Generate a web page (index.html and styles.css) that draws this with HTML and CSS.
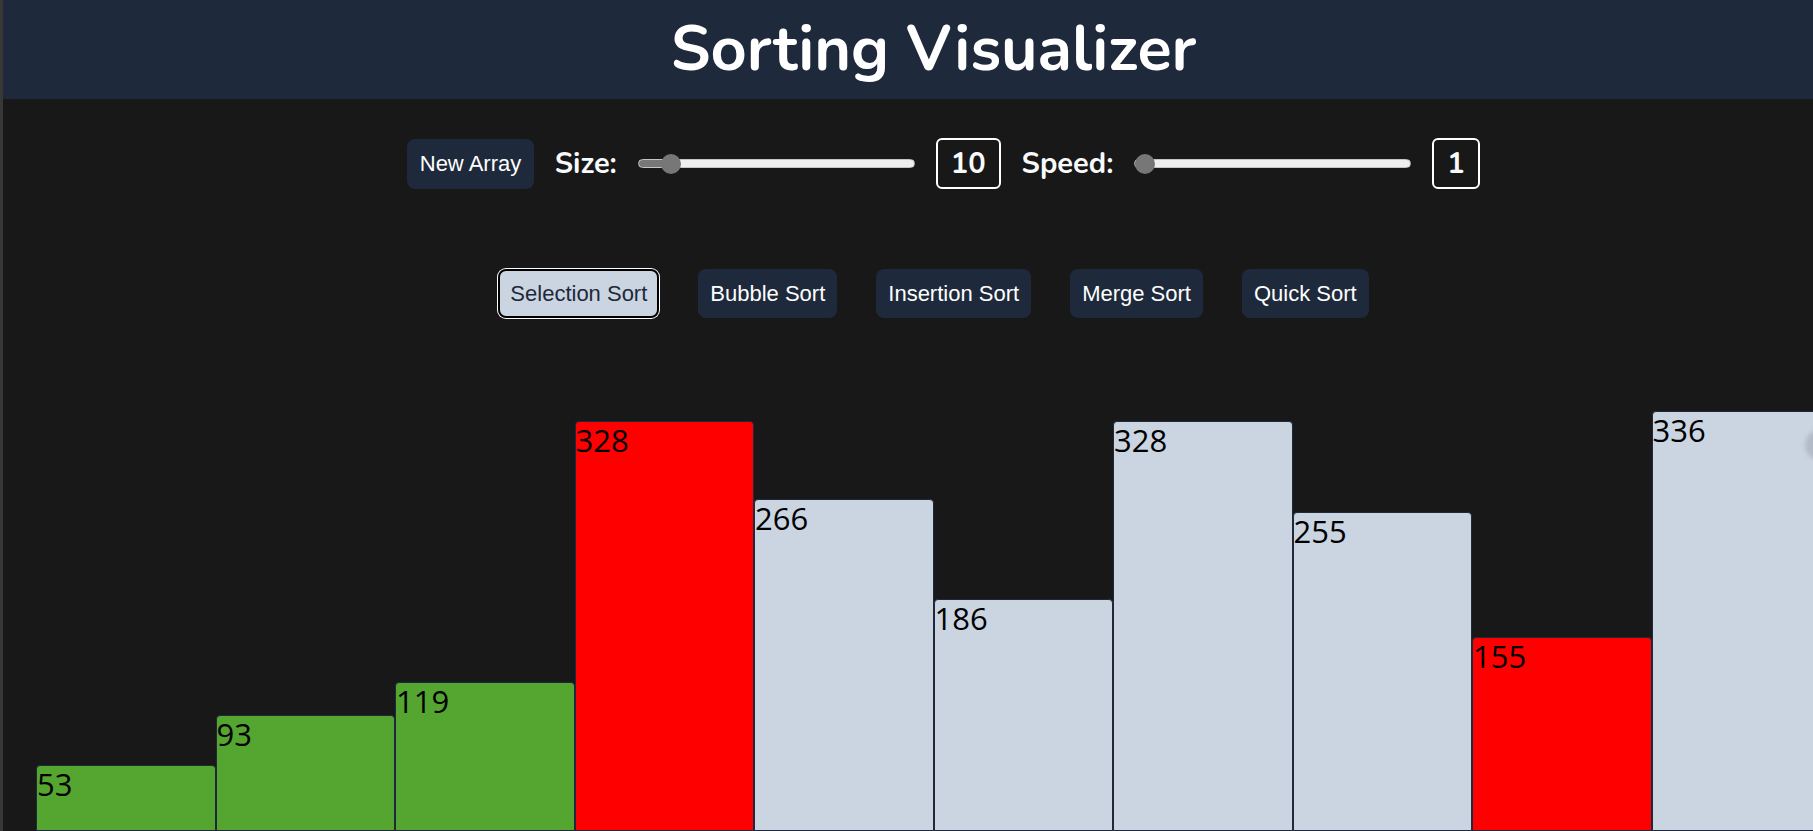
FILE: index.html
```html
<!DOCTYPE html>
<html lang="en">
<head>
<meta charset="utf-8">
<title>Sorting Visualizer</title>
<link rel="stylesheet" href="styles.css">
</head>
<body>
<div class="app">
  <header class="header">
    <h1 class="title">Sorting Visualizer</h1>
  </header>

  <section class="controls">
    <button class="btn">New Array</button>
    <label class="label" for="size">Size:</label>
    <input id="size" class="slider" type="range" min="5" max="63" value="10" style="--fill: 11.6%">
    <span class="value">10</span>
    <label class="label" for="speed">Speed:</label>
    <input id="speed" class="slider" type="range" min="1" max="10" value="1" style="--fill: 3.6%">
    <span class="value">1</span>
  </section>

  <nav class="algos">
    <button class="btn btn--active">Selection Sort</button>
    <button class="btn">Bubble Sort</button>
    <button class="btn">Insertion Sort</button>
    <button class="btn">Merge Sort</button>
    <button class="btn">Quick Sort</button>
  </nav>

  <main class="bars">
    <div class="bar bar--sorted" style="height:66.25px"><span class="bar__num">53</span></div>
    <div class="bar bar--sorted" style="height:116.25px"><span class="bar__num">93</span></div>
    <div class="bar bar--sorted" style="height:148.75px"><span class="bar__num">119</span></div>
    <div class="bar bar--compare" style="height:410px"><span class="bar__num">328</span></div>
    <div class="bar" style="height:332.5px"><span class="bar__num">266</span></div>
    <div class="bar" style="height:232.5px"><span class="bar__num">186</span></div>
    <div class="bar" style="height:410px"><span class="bar__num">328</span></div>
    <div class="bar" style="height:318.75px"><span class="bar__num">255</span></div>
    <div class="bar bar--compare" style="height:193.75px"><span class="bar__num">155</span></div>
    <div class="bar" style="height:420px"><span class="bar__num">336</span></div>
  </main>
</div>
<div class="edge-knob"></div>
</body>
</html>
```

FILE: styles.css
```css
html, body {
  margin: 0;
  padding: 0;
  height: 100%;
  overflow: hidden;
}

body {
  background: #181818;
  border-left: 3px solid #383838;
  font-family: "Liberation Sans", Arial, sans-serif;
}

.app {
  width: 1861px;
  height: 831px;
  display: flex;
  flex-direction: column;
}

.header {
  height: 99px;
  background: #1e293b;
  display: flex;
  align-items: center;
  justify-content: center;
  flex: none;
}

.title {
  margin: 0;
  padding-bottom: 2px;
  font-family: "Nunito", "Open Sans", sans-serif;
  font-weight: 700;
  font-size: 63px;
  line-height: 60px;
  color: #ffffff;
}

.controls {
  display: flex;
  align-items: center;
  justify-content: center;
  gap: 21px;
  padding: 39px 0 0 20px;
  height: 51px;
  flex: none;
}

.btn {
  border: none;
  border-radius: 8px;
  background: #1e293b;
  color: #ffffff;
  font-family: "Liberation Sans", Arial, sans-serif;
  font-size: 22px;
  line-height: 25px;
  padding: 12px 12px;
  cursor: pointer;
}

.controls .btn {
  padding: 12.5px 12.5px;
}

.btn--active {
  background: #cbd5e1;
  color: #1e293b;
  border: 2px solid #000000;
  padding: 10px 10px;
  box-shadow: 0 0 0 1px #ffffff;
}

.label {
  font-family: "Nunito", "Open Sans", sans-serif;
  font-weight: 700;
  font-size: 29px;
  color: #f8fafc;
}

.slider {
  -webkit-appearance: none;
  appearance: none;
  width: 277px;
  height: 20px;
  margin: 0;
  background: transparent;
}

.slider::-webkit-slider-runnable-track {
  height: 9px;
  border-radius: 5px;
  box-sizing: border-box;
  border: 1px solid #c4c4c4;
  background: linear-gradient(to right, #777777 0, #777777 var(--fill), #efefef var(--fill), #efefef 100%);
}

.slider::-webkit-slider-thumb {
  -webkit-appearance: none;
  appearance: none;
  width: 20px;
  height: 20px;
  margin-top: -6.5px;
  border-radius: 50%;
  background: #777777;
  border: none;
}

.value {
  box-sizing: border-box;
  height: 51px;
  padding: 0 13px;
  border: 2px solid #ffffff;
  border-radius: 6px;
  display: flex;
  align-items: center;
  font-family: "Nunito", "Open Sans", sans-serif;
  font-weight: 700;
  font-size: 29px;
  color: #f8fafc;
}

.algos {
  display: flex;
  justify-content: center;
  align-items: center;
  gap: 39px;
  padding-top: 80px;
  flex: none;
}

.bars {
  flex: 1;
  display: flex;
  justify-content: center;
  align-items: flex-end;
}

.bar {
  flex: none;
  box-sizing: border-box;
  width: 179.5px;
  border: 1px solid #1e293b;
  border-radius: 4px 4px 0 0;
  background: #cbd5e1;
}

.bar--sorted {
  background: #55a630;
}

.bar--compare {
  background: #ff0000;
}

.bar__num {
  display: block;
  font-family: "Open Sans", "Noto Sans", sans-serif;
  font-size: 31px;
  line-height: 37px;
  color: #000000;
}

.edge-knob {
  position: fixed;
  left: 1805px;
  top: 430px;
  width: 30px;
  height: 30px;
  border-radius: 50%;
  background: rgba(130, 138, 150, 0.35);
  filter: blur(2px);
}
```
